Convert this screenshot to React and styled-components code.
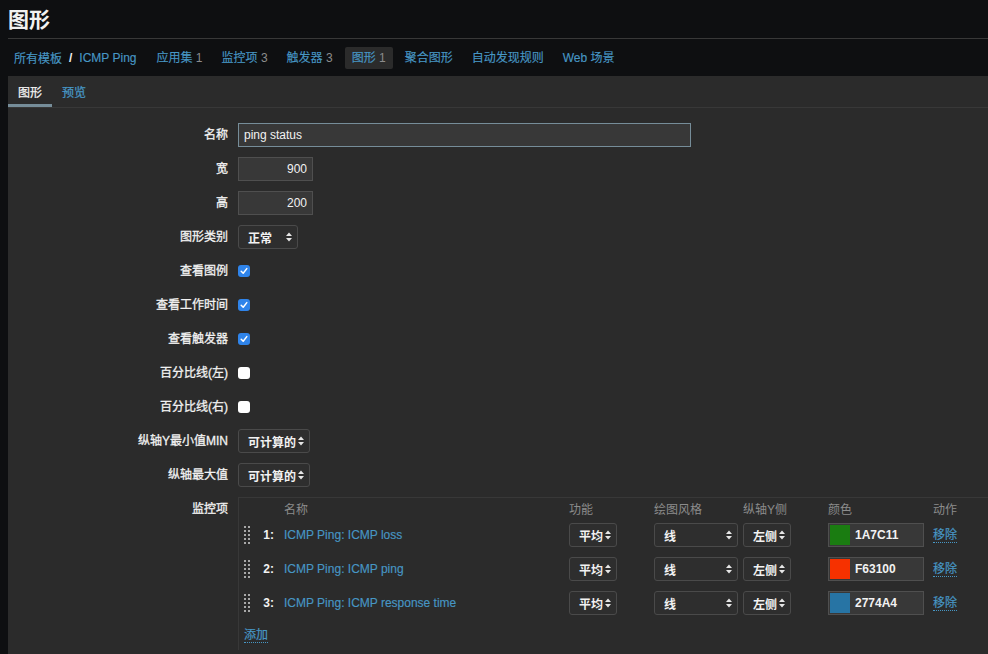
import React from "react";
import styled, { createGlobalStyle, css } from "styled-components";

const Global = createGlobalStyle`
  html, body { margin: 0; padding: 0; background: #0e0f11; }
  body {
    font-family: "Liberation Sans", "Noto Sans CJK SC", Arial, sans-serif;
    font-size: 12px;
    color: #f2f2f2;
  }
  * { box-sizing: border-box; }
`;

const Page = styled.div`
  padding-left: 8px;
  height: 654px;
  overflow: hidden;
`;

const Header = styled.header`
  height: 39px;
  border-bottom: 1px solid #383838;
  display: flex;
  align-items: center;
`;

const Title = styled.h1`
  margin: 0;
  font-size: 21px;
  font-weight: 700;
  line-height: 1;
  color: #f2f2f2;
`;

const Nav = styled.nav`
  height: 37px;
  display: flex;
  align-items: center;
  gap: 5px;
`;

const Breadcrumb = styled.div`
  display: flex;
  align-items: center;
  padding: 0 8px 0 6px;
`;

const Sep = styled.span`
  color: #f2f2f2;
  font-weight: 700;
  margin: 0 7px;
`;

const LinkText = styled.span`
  color: #4796c4;
  -webkit-text-stroke: 0.15px #4796c4;
`;

const NavItem = styled.div`
  height: 22px;
  line-height: 22px;
  padding: 0 7px;
  border-radius: 2px;
  color: #4796c4;
  -webkit-text-stroke: 0.15px #4796c4;
  white-space: nowrap;
  ${(p) => p.$active && css`background: #2b2b2b;`}
`;

const Count = styled.span`
  color: #8c8c8c;
  -webkit-text-stroke: 0;
`;

const Panel = styled.main`
  background: #2b2b2b;
  min-height: 578px;
`;

const Tabs = styled.div`
  height: 32px;
  display: flex;
  border-bottom: 1px solid #383838;
`;

const Tab = styled.div`
  height: 31px;
  padding: 0 10px;
  padding-top: 2px;
  display: flex;
  align-items: center;
  border-bottom: 3px solid ${(p) => (p.$active ? "#768d99" : "transparent")};
  color: ${(p) => (p.$active ? "#f2f2f2" : "#4796c4")};
  -webkit-text-stroke: 0.25px currentColor;
`;

const Form = styled.div`
  display: grid;
  grid-template-columns: 220px 1fr;
  column-gap: 10px;
  row-gap: 10px;
  padding-top: 15px;
`;

const Label = styled.div`
  text-align: right;
  line-height: 24px;
  height: 24px;
  white-space: nowrap;
  -webkit-text-stroke: 0.3px #f2f2f2;
`;

const Field = styled.div`
  display: flex;
  align-items: center;
  min-height: 24px;
`;

const TextInput = styled.input`
  height: 24px;
  width: ${(p) => p.$w}px;
  background: #383838;
  border: 1px solid ${(p) => (p.$focus ? "#768d99" : "#4f4f4f")};
  color: #f2f2f2;
  font: inherit;
  padding: 0 5px;
  outline: none;
  text-align: ${(p) => (p.$right ? "right" : "left")};
`;

const SelectBox = styled.div`
  height: 24px;
  width: ${(p) => p.$w}px;
  border: 1px solid #4a4a4a;
  border-radius: 3px;
  background: #2e2e2e;
  display: flex;
  align-items: center;
  justify-content: space-between;
  padding: 0 5px 0 9px;
  color: #f2f2f2;
  font-weight: 700;
  white-space: nowrap;
`;

const Arrows = () => (
  <svg width="6" height="10" viewBox="0 0 6 10">
    <path d="M0 4 L3 0.5 L6 4 Z M0 6 L3 9.5 L6 6 Z" fill="#e6e6e6" />
  </svg>
);

const Select = ({ w, children }) => (
  <SelectBox $w={w}>
    <span>{children}</span>
    <Arrows />
  </SelectBox>
);

const CheckBox = styled.span`
  width: 12px;
  height: 12px;
  border-radius: 3px;
  display: inline-flex;
  align-items: center;
  justify-content: center;
  background: ${(p) => (p.$checked ? "#2f84ea" : "#ffffff")};
`;

const Check = ({ checked }) => (
  <CheckBox $checked={checked}>
    {checked && (
      <svg width="8" height="8" viewBox="0 0 8 8">
        <path d="M1.2 4.2 L3.2 6.2 L6.8 1.6" stroke="#fff" strokeWidth="1.5" fill="none" strokeLinecap="round" strokeLinejoin="round" />
      </svg>
    )}
  </CheckBox>
);

const ItemsBox = styled.div`
  border-top: 1px solid #383838;
  border-left: 1px solid #383838;
  padding: 4px 0 0 5px;
  width: 100%;
`;

const cols = "14px 26px 285px 85px 89px 85px 105px 1fr";

const HeadRow = styled.div`
  display: grid;
  grid-template-columns: ${cols};
  height: 16px;
  line-height: 16px;
  color: #8c8c8c;
`;

const ItemRow = styled.div`
  display: grid;
  grid-template-columns: ${cols};
  height: 34px;
  align-items: center;
`;

const Num = styled.span`
  text-align: right;
  padding-right: 10px;
  font-weight: 700;
`;

const DashedLink = styled.span`
  color: #4796c4;
  -webkit-text-stroke: 0.2px #4796c4;
  border-bottom: 1px dotted #4796c4;
  justify-self: start;
  line-height: 14px;
`;

const AddRow = styled.div`
  height: 30px;
  display: flex;
  align-items: center;
`;

const ColorInput = styled.div`
  width: 96px;
  height: 24px;
  border: 1px solid #4f4f4f;
  background: #383838;
  display: flex;
  align-items: center;
  padding-left: 1px;
  gap: 5px;
  font-weight: 700;
`;

const Swatch = styled.span`
  width: 20px;
  height: 20px;
  background: ${(p) => p.$c};
`;

const Handle = () => (
  <svg width="6" height="18" viewBox="0 0 6 18">
    {[0, 4, 8, 12, 16].map((y) => (
      <g key={y} fill="#a8a8a8">
        <rect x="0" y={y} width="2" height="2" />
        <rect x="4" y={y} width="2" height="2" />
      </g>
    ))}
  </svg>
);

const navItems = [
  ["应用集", "1"],
  ["监控项", "3"],
  ["触发器", "3"],
  ["图形", "1", true],
  ["聚合图形"],
  ["自动发现规则"],
  ["Web 场景"],
];

const items = [
  { n: "1:", name: "ICMP Ping: ICMP loss", color: "#1a7c11", hex: "1A7C11" },
  { n: "2:", name: "ICMP Ping: ICMP ping", color: "#f63100", hex: "F63100" },
  { n: "3:", name: "ICMP Ping: ICMP response time", color: "#2774a4", hex: "2774A4" },
];

const checks = [
  ["查看图例", true],
  ["查看工作时间", true],
  ["查看触发器", true],
  ["百分比线(左)", false],
  ["百分比线(右)", false],
];

export default function App() {
  return (
    <>
      <Global />
      <Page>
        <Header>
          <Title>图形</Title>
        </Header>
        <Nav>
          <Breadcrumb>
            <LinkText>所有模板</LinkText>
            <Sep>/</Sep>
            <LinkText>ICMP Ping</LinkText>
          </Breadcrumb>
          {navItems.map(([t, c, a]) => (
            <NavItem key={t} $active={a}>
              {t}
              {c && <Count> {c}</Count>}
            </NavItem>
          ))}
        </Nav>
        <Panel>
          <Tabs>
            <Tab $active>图形</Tab>
            <Tab>预览</Tab>
          </Tabs>
          <Form>
            <Label>名称</Label>
            <Field>
              <TextInput $w={453} $focus readOnly value="ping status" />
            </Field>
            <Label>宽</Label>
            <Field>
              <TextInput $w={75} $right readOnly value="900" />
            </Field>
            <Label>高</Label>
            <Field>
              <TextInput $w={75} $right readOnly value="200" />
            </Field>
            <Label>图形类别</Label>
            <Field>
              <Select w={60}>正常</Select>
            </Field>
            {checks.map(([t, c]) => (
              <React.Fragment key={t}>
                <Label>{t}</Label>
                <Field>
                  <Check checked={c} />
                </Field>
              </React.Fragment>
            ))}
            <Label>纵轴Y最小值MIN</Label>
            <Field>
              <Select w={72}>可计算的</Select>
            </Field>
            <Label>纵轴最大值</Label>
            <Field>
              <Select w={72}>可计算的</Select>
            </Field>
            <Label>监控项</Label>
            <Field>
              <ItemsBox>
                <HeadRow>
                  <span />
                  <span />
                  <span>名称</span>
                  <span>功能</span>
                  <span>绘图风格</span>
                  <span>纵轴Y侧</span>
                  <span>颜色</span>
                  <span>动作</span>
                </HeadRow>
                {items.map((it) => (
                  <ItemRow key={it.n}>
                    <Handle />
                    <Num>{it.n}</Num>
                    <LinkText>{it.name}</LinkText>
                    <Select w={48}>平均</Select>
                    <Select w={84}>线</Select>
                    <Select w={48}>左侧</Select>
                    <ColorInput>
                      <Swatch $c={it.color} />
                      {it.hex}
                    </ColorInput>
                    <DashedLink>移除</DashedLink>
                  </ItemRow>
                ))}
                <AddRow>
                  <DashedLink>添加</DashedLink>
                </AddRow>
              </ItemsBox>
            </Field>
          </Form>
        </Panel>
      </Page>
    </>
  );
}
